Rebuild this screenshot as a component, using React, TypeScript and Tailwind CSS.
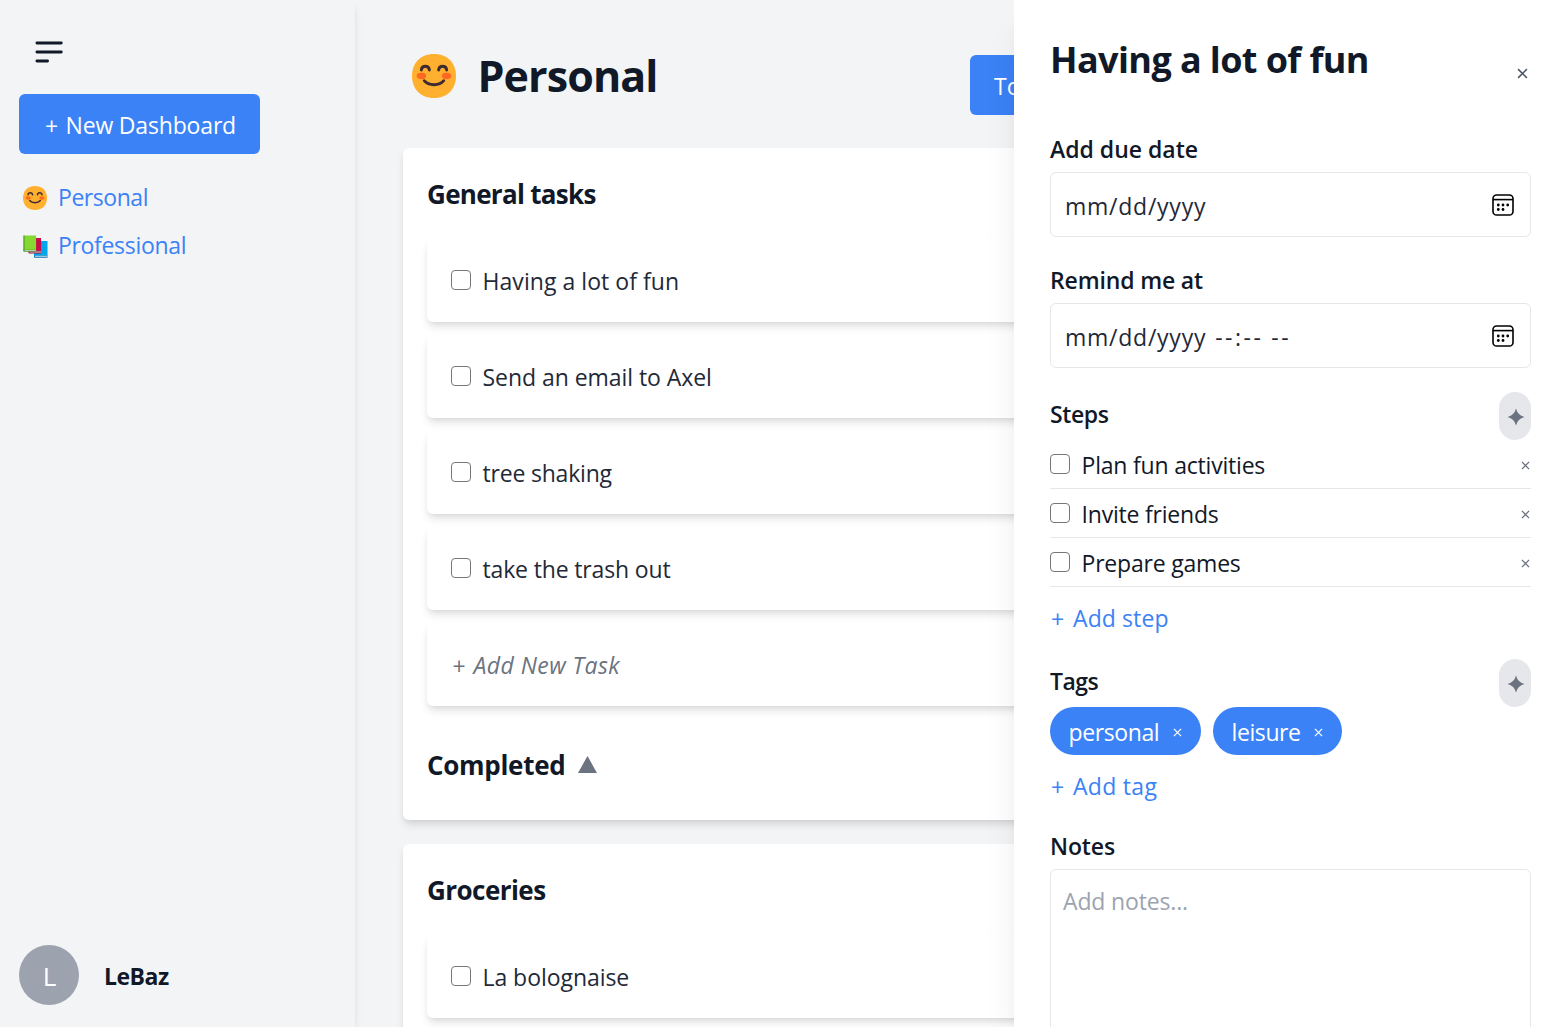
import type { ReactNode } from "react";

const CARD_SHADOW = "shadow-[0_6px_9px_-1.5px_rgba(0,0,0,0.1),0_3px_6px_-3px_rgba(0,0,0,0.1)]";

const generalTasks = [
  { label: "Having a lot of fun", tracking: "tracking-[0.05px]" },
  { label: "Send an email to Axel", tracking: "tracking-[-0.05px]" },
  { label: "tree shaking", tracking: "tracking-[-0.2px]" },
  { label: "take the trash out", tracking: "tracking-[-0.15px]" },
];

const groceries = [{ label: "La bolognaise", tracking: "tracking-[-0.05px]" }];

const steps = ["Plan fun activities", "Invite friends", "Prepare games"];

const tags = [
  { label: "personal", width: "w-[151px]" },
  { label: "leisure", width: "w-[129px]" },
];

function SmileIcon({ className }: { className: string }) {
  return (
    <svg viewBox="2 2 28 28" className={className} fill="none" aria-hidden="true">
      <path
        d="M16 30C25.33 30 30 23.53 30 16S25.33 2 16 2 2 8.47 2 16s4.67 14 14 14Z"
        fill="#ffb02e"
      />
      <ellipse cx="8" cy="16" rx="3" ry="2" fill="#ff6723" />
      <ellipse cx="24" cy="16" rx="3" ry="2" fill="#ff6723" />
      <g stroke="#402a32" strokeWidth="1.8" strokeLinecap="round">
        <path d="M7.9 12.2C8.3 9 12.7 9 13.1 12.2" />
        <path d="M18.9 12.2C19.3 9 23.7 9 24.1 12.2" />
        <path d="M9.8 19C12.5 22.4 19.5 22.4 22.2 19" />
      </g>
    </svg>
  );
}

function BooksIcon() {
  return (
    <svg viewBox="0 0 25 24" className="h-6 w-[25px]" aria-hidden="true">
      <path d="M11 6h13.5v15.5H11z" fill="#00a6ed" />
      <path d="M11 20.5h13.5v2.2H12q-1 0-1-1.2z" fill="#0074ba" />
      <path d="M12 20.7h12.5v1.2H12z" fill="#b8cdd9" />
      <path d="M5.5 3H18v13H5.5z" fill="#ca0b4a" />
      <path d="M5.5 16H18v2.4H6.5q-1 0-1-1.2z" fill="#990838" />
      <path d="M6.5 16.4H18v1.2H6.5z" fill="#cfc0cc" />
      <path d="M.5.5h12.6v14.8H.5z" fill="#86d72f" />
      <path d="M.5.5h1v16h-.5q-.5 0-.5-1z" fill="#44911b" />
      <path d="M.5 14.8h12.6v2H1.6q-1.1 0-1.1-1.2z" fill="#44911b" />
      <path d="M1.5 15.1h11.6v1H1.5z" fill="#c5d3cf" />
    </svg>
  );
}

function CalendarIcon() {
  return (
    <svg viewBox="0 0 22 22" className="h-[22px] w-[22px]" fill="none" aria-hidden="true">
      <rect x="1" y="1" width="20" height="20" rx="3.6" stroke="#000" strokeWidth="1.6" />
      <path d="M1 5.6h20" stroke="#000" strokeWidth="1.6" />
      <g fill="#000">
        <circle cx="6.3" cy="11" r="1.4" />
        <circle cx="11" cy="11" r="1.4" />
        <circle cx="15.7" cy="11" r="1.4" />
        <circle cx="6.3" cy="15.5" r="1.4" />
        <circle cx="11" cy="15.5" r="1.4" />
      </g>
    </svg>
  );
}

function Cross({ className }: { className: string }) {
  return (
    <svg viewBox="0 0 10 10" className={className} fill="none" stroke="currentColor" aria-hidden="true">
      <path d="M1 1l8 8M9 1L1 9" strokeWidth="1.4" />
    </svg>
  );
}

function Checkbox() {
  return (
    <span className="h-[19.5px] w-[19.5px] shrink-0 rounded-[4px] border-[1.5px] border-[#767676] bg-white" />
  );
}

function TaskRow({ children }: { children: ReactNode }) {
  return (
    <div className={`flex h-[84px] items-center rounded-md bg-white px-6 ${CARD_SHADOW}`}>{children}</div>
  );
}

function TaskList({ tasks }: { tasks: { label: string; tracking: string }[] }) {
  return (
    <>
      {tasks.map((task) => (
        <TaskRow key={task.label}>
          <Checkbox />
          <span className={`ml-3 h-9 leading-[38px] text-[#1f2937] ${task.tracking}`}>{task.label}</span>
        </TaskRow>
      ))}
    </>
  );
}

function SparkleButton() {
  return (
    <button className="flex h-12 w-8 items-center justify-center rounded-full bg-[#e5e7eb] pt-[2px] pl-px">
      <svg viewBox="0 0 18 18" className="h-[18px] w-[18px]" aria-hidden="true">
        <path d="M9 .6Q10.6 7.2 17.4 9 10.6 10.8 9 17.4 7.4 10.8.6 9 7.4 7.2 9 .6Z" fill="#6b7280" />
      </svg>
    </button>
  );
}

function AddLink({ label, tracking }: { label: string; tracking: string }) {
  return (
    <button className="mt-3 flex h-9 leading-[38px] text-[#3b82f6]">
      <span className="w-[23px] pl-px text-left leading-10">+</span>
      <span className={tracking}>{label}</span>
    </button>
  );
}

function Sidebar() {
  return (
    <aside className="flex w-[355px] shrink-0 flex-col bg-[#f3f4f6] px-[19px] pb-[22px] shadow-[0_6px_9px_-1.5px_rgba(0,0,0,0.1),0_3px_6px_-3px_rgba(0,0,0,0.1)]">
      <svg
        viewBox="0 0 30 24"
        className="mt-10 ml-[15px] h-6 w-[30px]"
        fill="none"
        stroke="#111827"
        strokeWidth="2.8"
        strokeLinecap="round"
        aria-hidden="true"
      >
        <path d="M2.9 3h24.4M2.9 12h24.4M2.9 21H13.6" />
      </svg>
      <button className="mt-[30px] flex h-[60px] w-[241px] items-center rounded-md bg-[#3b82f6] pl-[25px] text-white">
        <span className="h-9 w-[21.5px] pl-px text-left leading-10">+</span>
        <span className="h-9 leading-[38px] tracking-[-0.17px]">New Dashboard</span>
      </button>
      <nav className="mt-6 flex flex-col gap-3 pl-1 text-[#3b82f6]">
        <a className="flex h-9 items-center">
          <SmileIcon className="mt-[3px] h-6 w-6" />
          <span className="ml-[11px] h-9 leading-[38px] tracking-[-0.45px]">Personal</span>
        </a>
        <a className="flex h-9 items-center">
          <span className="mt-[5px]">
            <BooksIcon />
          </span>
          <span className="ml-[10px] h-9 leading-[38px] tracking-[-0.32px]">Professional</span>
        </a>
      </nav>
      <div className="mt-auto flex items-center gap-[25px]">
        <div className="flex h-[60px] w-[60px] items-center justify-center rounded-full bg-[#9ca3af] text-[26px] text-white">
          <span className="h-9 pl-px leading-[38px]">L</span>
        </div>
        <span className="h-9 leading-[39px] font-bold tracking-[-0.5px] text-[#111827]">LeBaz</span>
      </div>
    </aside>
  );
}

function Board() {
  return (
    <main className="min-w-0 flex-1 px-12">
      <header className="flex h-[148px] items-start justify-between pt-10">
        <h1 className="flex h-[72px] items-center pl-[9px] text-[43px] font-bold tracking-[-0.9px] text-[#111827]">
          <SmileIcon className="h-[44px] w-[44px]" />
          <span className="ml-[21.5px] h-[72px] leading-[72px]">Personal</span>
        </h1>
        <div className="mt-[15px] flex w-[543px]">
          <button className="flex h-[60px] items-center rounded-md bg-[#3b82f6] px-6 text-white">
            <span className="h-9 leading-[38px]">Today</span>
          </button>
        </div>
      </header>
      <div className="flex flex-col gap-6">
        <section className={`flex flex-col gap-3 rounded-md bg-white p-6 ${CARD_SHADOW}`}>
          <h2 className="mb-3 h-[42px] text-[26px] leading-[44px] font-bold tracking-[-0.7px] text-[#111827]">
            General tasks
          </h2>
          <TaskList tasks={generalTasks} />
          <TaskRow>
            <span className="h-9 w-[22.5px] pl-px leading-10 text-[#6b7280] italic">+</span>
            <span className="h-9 leading-[38px] tracking-[0.45px] text-[#6b7280] italic">Add New Task</span>
          </TaskRow>
          <h2 className="mt-6 mb-3 flex h-[42px] items-center text-[26px] font-bold tracking-[-0.3px] text-[#111827]">
            <span className="h-[42px] leading-[46px]">Completed</span>
            <svg viewBox="0 0 19 17" className="mt-[3px] ml-[13px] h-[17px] w-[19px]" aria-hidden="true">
              <path d="M9.5 0L19 17H0z" fill="#6b7280" />
            </svg>
          </h2>
        </section>
        <section className={`flex flex-col gap-3 rounded-md bg-white p-6 ${CARD_SHADOW}`}>
          <h2 className="mb-3 h-[42px] text-[26px] leading-[44px] font-bold tracking-[-0.55px] text-[#111827]">
            Groceries
          </h2>
          <TaskList tasks={groceries} />
        </section>
      </div>
    </main>
  );
}

function DateField({ label, tracking, children }: { label: string; tracking: string; children: ReactNode }) {
  return (
    <div className="mb-6">
      <div className={`mb-[6px] h-9 leading-[38px] font-semibold ${tracking}`}>{label}</div>
      <div className="flex h-[65px] items-center justify-between rounded-md border border-[#e5e7eb] pr-4 pl-[14px] text-[#1f2937]">
        <span className="flex h-9 leading-[38px]">{children}</span>
        <CalendarIcon />
      </div>
    </div>
  );
}

function TaskPanel() {
  return (
    <aside className="absolute inset-y-0 right-0 w-[547px] overflow-hidden bg-white pr-[30px] pl-9 text-[#111827] shadow-[0_30px_37.5px_-7.5px_rgba(0,0,0,0.1),0_12px_15px_-9px_rgba(0,0,0,0.1)]">
      <div className="flex h-[130px] items-start justify-between">
        <h2 className="mt-[33px] text-[36px] leading-[54px] font-bold tracking-[-0.6px]">Having a lot of fun</h2>
        <Cross className="mt-[68px] mr-[3px] h-[11px] w-[11px] text-[#4b5563]" />
      </div>
      <DateField label="Add due date" tracking="tracking-[0px]">
        <span className="tracking-[0.75px]">mm/dd/yyyy</span>
      </DateField>
      <DateField label="Remind me at" tracking="tracking-[-0.15px]">
        <span className="tracking-[0.75px]">mm/dd/yyyy</span>
        <span className="ml-[9px] tracking-[2.5px]">--:--</span>
        <span className="ml-[8px] tracking-[2.5px]">--</span>
      </DateField>

      <div className="flex h-12 justify-between">
        <span className="mt-[3px] h-9 leading-[38px] font-semibold tracking-[-0.4px]">Steps</span>
        <SparkleButton />
      </div>
      {steps.map((step) => (
        <div key={step} className="flex h-[49px] items-center border-b border-[#e5e7eb]">
          <Checkbox />
          <span className="ml-3 h-9 leading-[38px] tracking-[-0.2px] text-[#111827]">{step}</span>
          <Cross className="mt-[3px] mr-[1.5px] ml-auto h-[9px] w-[9px] text-[#6b7280]" />
        </div>
      ))}
      <AddLink label="Add step" tracking="tracking-[0.1px]" />

      <div className="mt-6 flex h-12 justify-between">
        <span className="mt-[3px] h-9 leading-[38px] font-semibold tracking-[-0.5px]">Tags</span>
        <SparkleButton />
      </div>
      <div className="flex gap-3">
        {tags.map((tag) => (
          <span
            key={tag.label}
            className={`flex h-12 items-center justify-between rounded-full bg-[#3b82f6] pr-[19.5px] pl-[18.5px] text-white ${tag.width}`}
          >
            <span className="h-9 leading-[38px] tracking-[-0.4px]">{tag.label}</span>
            <Cross className="mt-[3px] h-[9px] w-[9px]" />
          </span>
        ))}
      </div>
      <AddLink label="Add tag" tracking="tracking-[0.3px]" />

      <div className="mt-6 mb-[6px] h-9 leading-[38px] font-semibold tracking-[-0.1px]">Notes</div>
      <div className="h-[240px] rounded-md border border-[#e5e7eb] px-3 py-3 leading-[38px] tracking-[-0.15px] text-[#9ca3af]">
        Add notes...
      </div>
    </aside>
  );
}

export default function App() {
  return (
    <div className="relative flex h-[1027px] w-full overflow-hidden bg-[#f3f4f6] font-['Open_Sans','Noto_Sans',sans-serif] text-[23px] whitespace-nowrap">
      <Sidebar />
      <Board />
      <TaskPanel />
    </div>
  );
}
